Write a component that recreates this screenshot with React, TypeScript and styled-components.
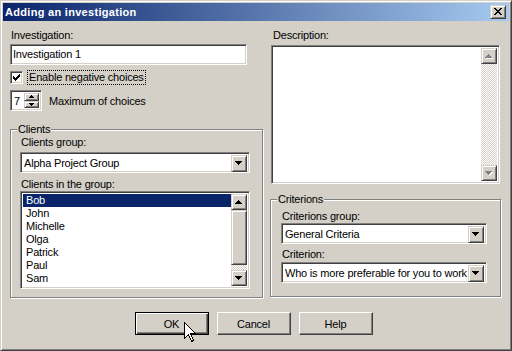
import React from "react";
import styled, { createGlobalStyle, css } from "styled-components";

const face = "#d4d0c8";
const shadow = "#808080";
const dark = "#404040";
const light = "#ffffff";
const navy = "#0a246a";

const GlobalStyle = createGlobalStyle`
  html, body {
    margin: 0;
    padding: 0;
    background: ${face};
  }
  body {
    font-family: "Liberation Sans", Arial, sans-serif;
    font-size: 11px;
    letter-spacing: -0.2px;
    color: #000;
  }
  * {
    box-sizing: border-box;
  }
`;

const sunken = css`
  background: #fff;
  border: 1px solid;
  border-color: ${shadow} ${light} ${light} ${shadow};
  box-shadow: inset 1px 1px ${dark}, inset -1px -1px ${face};
`;

const raised = css`
  background: ${face};
  border: 1px solid;
  border-color: ${face} ${dark} ${dark} ${face};
  box-shadow: inset 1px 1px ${light}, inset -1px -1px ${shadow};
`;

const Window = styled.div`
  position: relative;
  width: 512px;
  height: 351px;
  background: ${face};
  border: 1px solid;
  border-color: ${face} ${dark} ${dark} ${face};
  box-shadow: inset 1px 1px ${light}, inset -1px -1px ${shadow};
  padding: 2px;
  display: flex;
  flex-direction: column;
`;

const TitleBar = styled.div`
  height: 18px;
  flex: none;
  background: linear-gradient(to right, ${navy}, #a6caf0);
  display: flex;
  align-items: center;
  justify-content: space-between;
  padding: 0 3px 0 2px;
  color: #fff;
  font-weight: bold;
  font-size: 11px;
  letter-spacing: 0.3px;
`;

const CloseBtn = styled.div`
  ${raised};
  width: 16px;
  height: 14px;
  display: flex;
  align-items: center;
  justify-content: center;
  padding-bottom: 1px;
`;

const Body = styled.div`
  flex: 1;
  padding: 8px 8px 0 7px;
  display: flex;
  flex-direction: column;
`;

const Columns = styled.div`
  display: flex;
  gap: 7px;
`;

const Column = styled.div<{ $w: number }>`
  width: ${(p) => p.$w}px;
  display: flex;
  flex-direction: column;
`;

const Label = styled.div<{ $indent?: number; $top?: number }>`
  height: 13px;
  line-height: 13px;
  padding-left: ${(p) => p.$indent ?? 1}px;
  margin-top: ${(p) => p.$top ?? 0}px;
  white-space: nowrap;
`;

const TextInput = styled.div`
  ${sunken};
  width: 237px;
  height: 21px;
  margin-top: 2px;
  padding-left: 2px;
  line-height: 19px;
`;

const CheckRow = styled.div`
  display: flex;
  align-items: center;
  height: 15px;
  margin-top: 5px;
`;

const CheckBox = styled.div`
  ${sunken};
  width: 13px;
  height: 13px;
  display: flex;
  align-items: center;
  justify-content: center;
`;

const FocusLabel = styled.span`
  border: 1px dotted #000;
  margin-left: 4px;
  padding: 0 1px;
  line-height: 13px;
`;

const SpinRow = styled.div`
  display: flex;
  align-items: center;
  gap: 7px;
  margin-top: 5px;
`;

const Spin = styled.div`
  ${sunken};
  width: 32px;
  height: 21px;
  display: flex;
  padding: 2px;
`;

const SpinValue = styled.div`
  flex: 1;
  line-height: 17px;
  padding-left: 1px;
`;

const SpinButtons = styled.div`
  width: 15px;
  display: flex;
  flex-direction: column;
`;

const SpinBtn = styled.div`
  ${raised};
  flex: 1;
  display: flex;
  align-items: center;
  justify-content: center;
`;

const Group = styled.div<{ $top: number; $h: number; $pt: number }>`
  position: relative;
  margin-top: ${(p) => p.$top}px;
  height: ${(p) => p.$h}px;
  border: 1px solid ${shadow};
  box-shadow: inset 1px 1px ${light}, 1px 1px ${light};
  padding: ${(p) => p.$pt}px 0 0 ${(p) => (p.$pt > 8 ? 10 : 9)}px;
  display: flex;
  flex-direction: column;
`;

const Caption = styled.span`
  position: absolute;
  top: -7px;
  left: 6px;
  padding: 0 1px;
  background: ${face};
  line-height: 13px;
`;

const Combo = styled.div<{ $w: number; $top?: number }>`
  ${sunken};
  width: ${(p) => p.$w}px;
  height: 21px;
  margin-top: ${(p) => p.$top ?? 3}px;
  padding: 2px;
  display: flex;
`;

const ComboText = styled.div`
  flex: 1;
  line-height: 17px;
  padding-left: 1px;
  white-space: nowrap;
  overflow: hidden;
`;

const ArrowBtn = styled.div<{ $h?: number }>`
  ${raised};
  width: 16px;
  height: ${(p) => p.$h ?? 17}px;
  flex: none;
  display: flex;
  align-items: center;
  justify-content: center;
`;

const ListBox = styled.div`
  ${sunken};
  width: 230px;
  height: 98px;
  padding: 2px;
  display: flex;
`;

const Items = styled.div`
  flex: 1;
  overflow: hidden;
`;

const Item = styled.div<{ $selected?: boolean }>`
  height: 13px;
  line-height: 13px;
  padding-left: 3px;
  background: ${(p) => (p.$selected ? navy : "transparent")};
  color: ${(p) => (p.$selected ? "#fff" : "#000")};
`;

const ScrollBar = styled.div`
  width: 16px;
  display: flex;
  flex-direction: column;
`;

const Track = styled.div`
  flex: 1;
  background-color: ${face};
  background-image: conic-gradient(
    ${light} 25%,
    ${face} 0 50%,
    ${light} 0 75%,
    ${face} 0
  );
  background-size: 2px 2px;
`;

const Thumb = styled.div<{ $h: number }>`
  ${raised};
  height: ${(p) => p.$h}px;
`;

const TextArea = styled.div`
  ${sunken};
  margin: 3px 0 0 1px;
  width: 229px;
  height: 139px;
  padding: 2px;
  display: flex;
  justify-content: flex-end;
`;

const Footer = styled.div`
  display: flex;
  justify-content: center;
  gap: 8px;
  margin-top: 14px;
  padding-right: 4px;
`;

const PushButton = styled.div<{ $default?: boolean }>`
  width: 74px;
  height: 23px;
  background: ${face};
  display: flex;
  align-items: center;
  justify-content: center;
  border: 1px solid;
  ${(p) =>
    p.$default
      ? css`
          border-color: #000;
          box-shadow: inset 1px 1px ${light}, inset -1px -1px ${dark},
            inset -2px -2px ${shadow};
        `
      : css`
          border-color: ${light} ${dark} ${dark} ${light};
          box-shadow: inset -1px -1px ${shadow};
        `}
`;

const Cursor = styled.svg`
  position: absolute;
  left: 183px;
  top: 321px;
`;

type Dir = "up" | "down";

const Tri = ({ dir, disabled }: { dir: Dir; disabled?: boolean }) => {
  const rows = [7, 5, 3, 1];
  const ordered = dir === "down" ? rows : [...rows].reverse();
  const draw = (dx: number, dy: number, fill: string) =>
    ordered.map((w, i) => (
      <rect
        key={`${fill}${i}`}
        x={(7 - w) / 2 + dx}
        y={i + dy}
        width={w}
        height={1}
        fill={fill}
      />
    ));
  return (
    <svg width="8" height="5" shapeRendering="crispEdges">
      {disabled && draw(1, 1, light)}
      {draw(0, 0, disabled ? shadow : "#000")}
    </svg>
  );
};

const SmallTri = ({ dir }: { dir: Dir }) => {
  const rows = dir === "down" ? [5, 3, 1] : [1, 3, 5];
  return (
    <svg width="5" height="3" shapeRendering="crispEdges">
      {rows.map((w, i) => (
        <rect key={i} x={(5 - w) / 2} y={i} width={w} height={1} fill="#000" />
      ))}
    </svg>
  );
};

const Check = () => {
  const cols = [2, 3, 4, 3, 2, 1, 0];
  return (
    <svg width="7" height="7" shapeRendering="crispEdges">
      {cols.map((y, x) => (
        <rect key={x} x={x} y={y} width={1} height={3} fill="#000" />
      ))}
    </svg>
  );
};

const clients = ["Bob", "John", "Michelle", "Olga", "Patrick", "Paul", "Sam", "Sarah"];

export default function App() {
  return (
    <>
      <GlobalStyle />
      <Window>
        <TitleBar>
          <span>Adding an investigation</span>
          <CloseBtn>
            <svg width="8" height="7" shapeRendering="crispEdges">
              <path d="M0 0h2v1h-2zM6 0h2v1h-2zM1 1h2v1h-2zM5 1h2v1h-2zM2 2h4v1h-4zM3 3h2v1h-2zM2 4h4v1h-4zM1 5h2v1h-2zM5 5h2v1h-2zM0 6h2v1h-2zM6 6h2v1h-2z" fill="#000" />
            </svg>
          </CloseBtn>
        </TitleBar>
        <Body>
          <Columns>
            <Column $w={253}>
              <Label>Investigation:</Label>
              <TextInput>Investigation 1</TextInput>
              <CheckRow>
                <CheckBox>
                  <Check />
                </CheckBox>
                <FocusLabel>Enable negative choices</FocusLabel>
              </CheckRow>
              <SpinRow>
                <Spin>
                  <SpinValue>7</SpinValue>
                  <SpinButtons>
                    <SpinBtn>
                      <SmallTri dir="up" />
                    </SpinBtn>
                    <SpinBtn>
                      <SmallTri dir="down" />
                    </SpinBtn>
                  </SpinButtons>
                </Spin>
                <span>Maximum of choices</span>
              </SpinRow>
              <Group $top={18} $h={169} $pt={6}>
                <Caption>Clients</Caption>
                <Label>Clients group:</Label>
                <Combo $w={230}>
                  <ComboText>Alpha Project Group</ComboText>
                  <ArrowBtn>
                    <Tri dir="down" />
                  </ArrowBtn>
                </Combo>
                <Label $top={5}>Clients in the group:</Label>
                <ListBox>
                  <Items>
                    {clients.map((c, i) => (
                      <Item key={c} $selected={i === 0}>
                        {c}
                      </Item>
                    ))}
                  </Items>
                  <ScrollBar>
                    <ArrowBtn $h={16}>
                      <Tri dir="up" />
                    </ArrowBtn>
                    <Thumb $h={55} />
                    <Track />
                    <ArrowBtn $h={16}>
                      <Tri dir="down" />
                    </ArrowBtn>
                  </ScrollBar>
                </ListBox>
              </Group>
            </Column>
            <Column $w={231}>
              <Label $indent={3}>Description:</Label>
              <TextArea>
                <ScrollBar>
                  <ArrowBtn $h={16}>
                    <Tri dir="up" disabled />
                  </ArrowBtn>
                  <Track />
                  <ArrowBtn $h={16}>
                    <Tri dir="down" disabled />
                  </ArrowBtn>
                </ScrollBar>
              </TextArea>
              <Group $top={15} $h={98} $pt={10}>
                <Caption>Criterions</Caption>
                <Label>Criterions group:</Label>
                <Combo $w={206} $top={0}>
                  <ComboText>General Criteria</ComboText>
                  <ArrowBtn>
                    <Tri dir="down" />
                  </ArrowBtn>
                </Combo>
                <Label $top={4}>Criterion:</Label>
                <Combo $w={206} $top={1}>
                  <ComboText>Who is more preferable for you to work with?</ComboText>
                  <ArrowBtn>
                    <Tri dir="down" />
                  </ArrowBtn>
                </Combo>
              </Group>
            </Column>
          </Columns>
          <Footer>
            <PushButton $default>OK</PushButton>
            <PushButton>Cancel</PushButton>
            <PushButton>Help</PushButton>
          </Footer>
        </Body>
        <Cursor width="13" height="21" viewBox="0 0 13 21" shapeRendering="crispEdges">
          <path
            d="M0.5 0.5 L0.5 16.5 L4.5 12.5 L7.5 19.5 L9.5 18.5 L6.5 11.5 L11.5 11.5 Z"
            fill="#fff"
            stroke="#000"
            strokeWidth="1"
          />
        </Cursor>
      </Window>
    </>
  );
}
